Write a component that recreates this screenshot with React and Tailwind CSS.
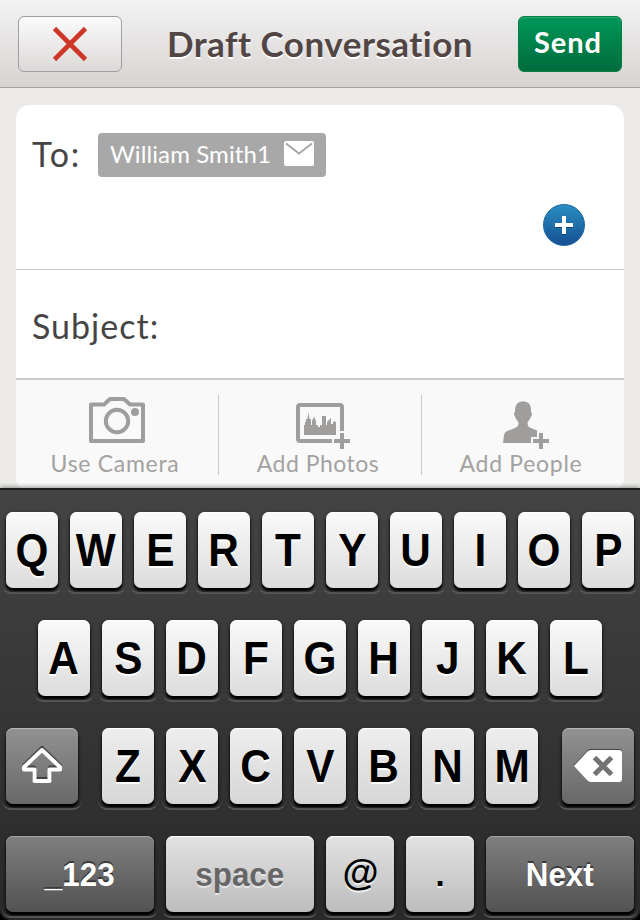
import React from "react";

function Key({ className = "", children }) {
  return (
    <div className={"relative h-[76px] shrink-0 " + className}>
      <div className="absolute -inset-x-1 -bottom-[6px] h-3 rounded-b-[9px] border-b-2 border-[#5a5a5a]" />
      <div className="absolute inset-0 rounded-[7px] shadow-[0_3px_2px_#000,0_2px_4px_#0009]" />
      <div className="relative flex h-full items-center justify-center">{children}</div>
    </div>
  );
}

const light = "rounded-[7px] bg-linear-to-b from-[#fafafa] to-[#dcdcdc] shadow-[inset_0_1px_0_#fff]";
const soft = "rounded-[7px] bg-linear-to-b from-[#eeeeee] to-[#d6d6d6] shadow-[inset_0_1px_0_#fff]";
const dim = "rounded-[7px] bg-linear-to-b from-[#e2e2e2] to-[#bdbdbd] shadow-[inset_0_1px_0_#fff]";
const dark = "rounded-[7px] bg-linear-to-b from-[#929292] to-[#686868] shadow-[inset_0_1px_0_#b5b5b5]";
const darker = "rounded-[7px] bg-linear-to-b from-[#808080] to-[#525252] shadow-[inset_0_1px_0_#a5a5a5]";

function Face({ look, children }) {
  return <div className={"flex h-full w-full items-center justify-center " + look}>{children}</div>;
}

function Letter({ c, look = light }) {
  return (
    <Key className="w-[52px]">
      <Face look={look}>
        <span className="scale-x-[0.92] text-[46px] leading-[74px] font-bold text-black [text-shadow:0_2px_0_#fff]">{c}</span>
      </Face>
    </Key>
  );
}

function Tool({ label, icon, spacing }) {
  return (
    <div className="flex flex-1 flex-col items-center">
      <div className="h-[54px]">{icon}</div>
      <span className={"mr-1 text-[23px] leading-[28px] whitespace-nowrap text-[#a3a2a1] " + spacing}>{label}</span>
    </div>
  );
}

const Camera = (
  <svg className="mt-px" width="56" height="56" viewBox="0 0 56 56" fill="none" stroke="#9f9e9c" strokeWidth="4">
    <path d="M2 9.5H15L21 4H35L41 9.5H54V46H2Z" transform="translate(0 -1)" strokeLinejoin="round" />
    <circle cx="28" cy="25" r="11.2" />
    <circle cx="46" cy="16" r="4" fill="#9f9e9c" stroke="none" />
  </svg>
);

const Photos = (
  <svg className="mt-[3px] ml-[6px]" width="54" height="56" viewBox="0 0 54 56" fill="none">
    <path d="M36 43H4Q2 43 2 41V9Q2 7 4 7H44Q46 7 46 9V33" stroke="#9f9e9c" strokeWidth="4" />
    <path d="M8 37V27H9V24H10V21H11.500L12.500 14L13.500 21H15V27H16V23L18 18.500L20 23V27H22V29H24V27H26V18H30V27H31V24L35 20V26H37V24L39 23L40 25V37Z" fill="#9f9e9c" />
    <path d="M46 35V51M38 43H54" stroke="#9f9e9c" strokeWidth="4" />
  </svg>
);

const Person = (
  <svg className="mt-[3px] ml-[6px]" width="46" height="56" viewBox="0 0 46 56" fill="none">
    <path d="M0 45L1 37Q1.500 34 4 33L12 30Q15.500 29 15.500 24.500L12.500 20L11 16Q11 14 12 14Q11.500 3.500 20 3.200Q29 3.500 28 14Q29 14 29 16L27.500 20L24.500 24.500Q24.500 29 28 30L34 32.500V39H28V45Z" fill="#9f9e9c" />
    <path d="M38 35V51M30 43H46" stroke="#9f9e9c" strokeWidth="4" />
  </svg>
);

export default function App() {
  return (
    <div className="flex h-[920px] w-[640px] flex-col overflow-hidden bg-black font-['Lato',sans-serif]">
      <header className="flex h-[88px] shrink-0 items-start justify-between border-b border-[#a3a1a0] bg-linear-to-b from-[#f3f3f3] to-[#d7d3d2] px-[18px] pt-4">
        <button className="flex h-[56px] w-[104px] items-center justify-center rounded-[6px] border border-[#a09e9e] bg-linear-to-b from-[#fbfbfb] to-[#dcd9d8]">
          <svg width="36" height="36" viewBox="0 0 36 36" stroke="#cd3728" strokeWidth="4.600">
            <path d="M2.500 2.500L33.500 33.500M33.500 2.500L2.500 33.500" />
          </svg>
        </button>
        <h1 className="pt-[3px] text-[35px] leading-[48px] font-bold tracking-[0.5px] whitespace-nowrap text-[#524644] [text-shadow:0_2px_0_#fff]">Draft Conversation</h1>
        <button className="flex h-[56px] w-[104px] justify-center rounded-[6px] border border-[#05803f] bg-linear-to-b from-[#00985a] to-[#006b3c] pr-1 text-[29px] leading-[50px] font-bold tracking-[0.9px] text-white shadow-[inset_0_1px_0_#2ba873]">Send</button>
      </header>

      <main className="flex h-[403px] shrink-0 flex-col bg-[#ebeae8] px-4 pt-[17px]">
        <div className="flex h-[386px] flex-col overflow-hidden rounded-[14px] bg-white">
          <section className="flex h-[165px] shrink-0 flex-col border-b border-[#cbc9c9] pt-7">
            <div className="flex items-center pl-[16px]">
              <span className="w-[66px] pb-[2px] text-[34px] leading-[42px] tracking-[1.8px] text-[#454545]">To:</span>
              <div className="flex h-[44px] w-[228px] items-start justify-between rounded-[4px] bg-[#a8a8a8] pr-3 pl-3">
                <span className="text-[24px] leading-[41px] tracking-[0.1px] whitespace-nowrap text-white">William Smith1</span>
                <svg className="mt-2" width="30" height="26" viewBox="0 0 30 26">
                  <rect width="30" height="25" rx="2" fill="#fff" />
                  <path d="M2 2.500L15 12.500L28 2.500" fill="none" stroke="#a8a8a8" strokeWidth="2" />
                </svg>
              </div>
            </div>
            <div className="mt-[27px] flex justify-end pr-[39px]">
              <div className="flex h-[42px] w-[42px] items-center justify-center rounded-full border border-[#1d68a2] bg-linear-to-b from-[#2a8ec2] to-[#174f92]">
                <svg width="18" height="20" viewBox="0 0 18 20" strokeWidth="4">
                  <path d="M9 2V20M0 11H18" stroke="#124477" />
                  <path d="M9 1V19M0 10H18" stroke="#fff" />
                </svg>
              </div>
            </div>
          </section>
          <section className="flex h-[110px] shrink-0 items-center border-b-2 border-[#cdc9ca] pt-[3px] pl-[16px]">
            <span className="text-[34px] leading-[44px] tracking-[1px] text-[#454545]">Subject:</span>
          </section>
          <section className="flex h-[111px] shrink-0 bg-[#f9f9f9] pt-[15px]">
            <Tool label="Use Camera" spacing="tracking-[0.7px]" icon={Camera} />
            <div className="h-20 w-px bg-[#cbc9c9]" />
            <Tool label="Add Photos" spacing="tracking-[0.5px]" icon={Photos} />
            <div className="h-20 w-px bg-[#cbc9c9]" />
            <Tool label="Add People" spacing="tracking-[0.7px]" icon={Person} />
          </section>
        </div>
      </main>

      <div className="relative -mt-[3px] flex h-[432px] shrink-0 flex-col gap-8 rounded-b-[10px] border-t-2 border-[#1b201b] bg-linear-to-b from-[#444444] to-[#292929] px-[6px] pt-[22px] font-['Liberation_Sans',sans-serif] shadow-[0_-1px_4px_#1b201b77]">
        <div className="flex gap-3">
          {"QWERTYUIOP".split("").map((c) => <Letter key={c} c={c} />)}
        </div>
        <div className="flex justify-center gap-3">
          {"ASDFGHJKL".split("").map((c) => <Letter key={c} c={c} />)}
        </div>
        <div className="flex justify-between">
          <Key className="w-[72px]">
            <Face look={dark}>
              <svg width="42" height="40" viewBox="0 0 42 40" fill="none" strokeWidth="4" strokeLinejoin="round">
                <path d="M21 3L3 20.500V22.500H13V34H29V22.500H39V20.500Z" stroke="#444" transform="translate(0 -1)" />
                <path d="M21 4L3 21V23.500H13.500V35H28.500V23.500H39V21Z" stroke="#fff" />
              </svg>
            </Face>
          </Key>
          <div className="flex gap-3">
            {"ZXCVBNM".split("").map((c) => <Letter key={c} c={c} look={soft} />)}
          </div>
          <Key className="w-[72px]">
            <Face look={dark}>
              <svg width="50" height="36" viewBox="0 0 50 36">
                <path d="M1 17L15 2Q16 1 18 1H46Q49 1 49 4V30H15Z" fill="#444" />
                <path d="M1 18L14 4Q16 2 18 2H46Q49 2 49 5V31Q49 34 46 34H18Q16 34 14 32Z" fill="#fff" />
                <path d="M21.500 9.500L38.500 26.500M38.500 9.500L21.500 26.500" stroke="#737373" strokeWidth="5" />
              </svg>
            </Face>
          </Key>
        </div>
        <div className="flex gap-3 text-[33px] leading-[74px] font-bold">
          <Key className="w-[148px]">
            <Face look={darker}><span className="scale-x-[0.95] pt-[2px] text-white [text-shadow:0_-2px_0_#3a3a3a]">_123</span></Face>
          </Key>
          <Key className="w-[148px]">
            <Face look={dim}><span className="scale-x-[0.95] pt-[2px] text-[#666] [text-shadow:0_2px_0_#e5e5e5]">space</span></Face>
          </Key>
          <Key className="w-[68px]">
            <Face look={dim}><span className="pb-[3px] pl-px text-[37px] text-black [text-shadow:0_2px_0_#eee]">@</span></Face>
          </Key>
          <Key className="w-[68px]">
            <Face look={dim}><span className="pt-[2px] text-black [text-shadow:0_2px_0_#eee]">.</span></Face>
          </Key>
          <Key className="w-[148px]">
            <Face look={darker}><span className="scale-x-[0.95] pt-[2px] text-white [text-shadow:0_-2px_0_#3a3a3a]">Next</span></Face>
          </Key>
        </div>
      </div>
    </div>
  );
}
